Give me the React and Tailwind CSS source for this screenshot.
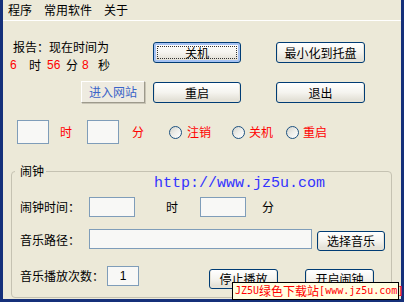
import React from "react";

const cjk = "font-['SimSun','Noto_Sans_CJK_SC',sans-serif]";

function XpButton({ children, className = "", focused = false }) {
  return (
    <div
      className={`relative flex items-center justify-center border border-[#003c74] rounded-[3px] bg-linear-to-b from-[#ffffff] via-[#f5f4ef] to-[#dedbd0] text-black leading-none ${
        focused ? "shadow-[inset_0_0_0_2px_#a5c2f3]" : "shadow-[inset_0_-1px_0_1px_#e6e3d8]"
      } ${className}`}
    >
      {focused && (
        <span className="absolute inset-[3px] border border-dotted border-[#333]" />
      )}
      <span className="relative">{children}</span>
    </div>
  );
}

function Input({ className = "", children }) {
  return (
    <div
      className={`border border-[#7f9db9] bg-[#f8f8f6] flex items-center justify-center font-['Liberation_Sans',sans-serif] text-[12px] ${className}`}
    >
      {children}
    </div>
  );
}

function Radio() {
  return (
    <div className="w-[13px] h-[13px] rounded-full border border-[#1c5180] bg-linear-to-br from-[#d4d4cc] via-[#eeeeea] to-[#ffffff]" />
  );
}

export default function App() {
  return (
    <div
      className={`relative w-[404px] h-[302px] bg-[#ece9d8] border-x-[3px] border-b-[3px] border-[#15307a] ${cjk} text-[12px] text-black`}
    >
      {/* menu */}
      <div className="h-[21px] border-b border-white flex items-center pl-[5px] gap-[12px] leading-[16px]">
        <span>程序</span>
        <span>常用软件</span>
        <span>关于</span>
      </div>

      {/* section 1 */}
      <div className="flex">
        <div className="w-[150px] flex flex-col">
          <div className="pt-[18px] pl-[10px] leading-[16px]">报告：现在时间为</div>
          <div className="mt-[2px] flex leading-[16px]">
            <span className="w-[26px] pl-[7px] text-[#ff0000] font-['Liberation_Sans',sans-serif]">6</span>
            <span className="w-[18px]">时</span>
            <span className="w-[19px] text-[#ff0000] font-['Liberation_Sans',sans-serif]">56</span>
            <span className="w-[16px]">分</span>
            <span className="w-[16px] text-[#ff0000] font-['Liberation_Sans',sans-serif]">8</span>
            <span>秒</span>
          </div>
          <div className="mt-[8px] ml-[78px] w-[64px] h-[22px] flex items-center justify-center text-[#3a64c8] bg-[#eeebe0] border border-t-white border-l-white border-r-[#9d9a8c] border-b-[#9d9a8c] shadow-[1px_1px_0_#c9c5b6]">
            进入网站
          </div>
        </div>
        <div className="pt-[21px] grid grid-cols-[88px_89px] gap-x-[35px] gap-y-[19px]">
          <XpButton className="h-[21px]" focused>关机</XpButton>
          <XpButton className="h-[21px]">最小化到托盘</XpButton>
          <XpButton className="h-[21px]">重启</XpButton>
          <XpButton className="h-[21px]">退出</XpButton>
        </div>
      </div>

      {/* section 2 */}
      <div className="mt-[17px] flex items-center pl-[14px] text-[#ff0000]">
        <Input className="w-[32px] h-[24px]" />
        <span className="ml-[11px]">时</span>
        <Input className="ml-[15px] w-[32px] h-[24px]" />
        <span className="ml-[13px]">分</span>
        <div className="ml-[25px]"><Radio /></div>
        <span className="ml-[5px]">注销</span>
        <div className="ml-[21px]"><Radio /></div>
        <span className="ml-[4px]">关机</span>
        <div className="ml-[13px]"><Radio /></div>
        <span className="ml-[4px]">重启</span>
      </div>

      {/* group box */}
      <fieldset className="mt-[20px] ml-[8px] w-[381px] h-[134px] border border-[#c5c2b2] rounded-[4px]">
        <legend className="ml-[3px] pl-[5px] pr-[2px] leading-[14px]">闹钟</legend>
        <div className="pl-[142px] leading-[14px] font-['Liberation_Mono',monospace] text-[15px] text-[#3333ff] -mt-[1px]">
          http://www.jz5u.com
        </div>
        <div className="mt-[6px] flex items-center h-[20px] pl-[8px]">
          <span className="w-[60px]">闹钟时间：</span>
          <Input className="ml-[9px] w-[46px] h-[20px]" />
          <span className="ml-[31px]">时</span>
          <Input className="ml-[22px] w-[46px] h-[20px]" />
          <span className="ml-[16px]">分</span>
        </div>
        <div className="mt-[12px] flex items-start pl-[8px]">
          <span className="w-[60px] mt-[3px] leading-[16px]">音乐路径：</span>
          <Input className="ml-[9px] w-[223px] h-[20px]" />
          <XpButton className="ml-[5px] mt-[2px] w-[68px] h-[20px]">选择音乐</XpButton>
        </div>
        <div className="mt-[15px] flex items-start pl-[8px]">
          <span className="w-[84px] mt-[2px] leading-[16px]">音乐播放次数：</span>
          <Input className="ml-[3px] w-[32px] h-[20px]">1</Input>
          <XpButton className="ml-[70px] mt-[3px] w-[69px] h-[20px]">停止播放</XpButton>
          <XpButton className="ml-[27px] mt-[3px] w-[69px] h-[20px]">开启闹钟</XpButton>
        </div>
      </fieldset>

      {/* tooltip overlay */}
      <div className="absolute left-[229px] top-[282px] w-[167px] h-[18px] bg-[#ffffe1] border border-black flex items-center pl-[2px] text-[#ff0000] leading-none whitespace-nowrap">
        <span className="font-['DejaVu_Sans_Mono',monospace] text-[10px]">JZ5U</span>
        <span className="text-[12px]">绿色下载站</span>
        <span className="font-['DejaVu_Sans_Mono',monospace] text-[10px]">[www.jz5u.com]</span>
      </div>
    </div>
  );
}
